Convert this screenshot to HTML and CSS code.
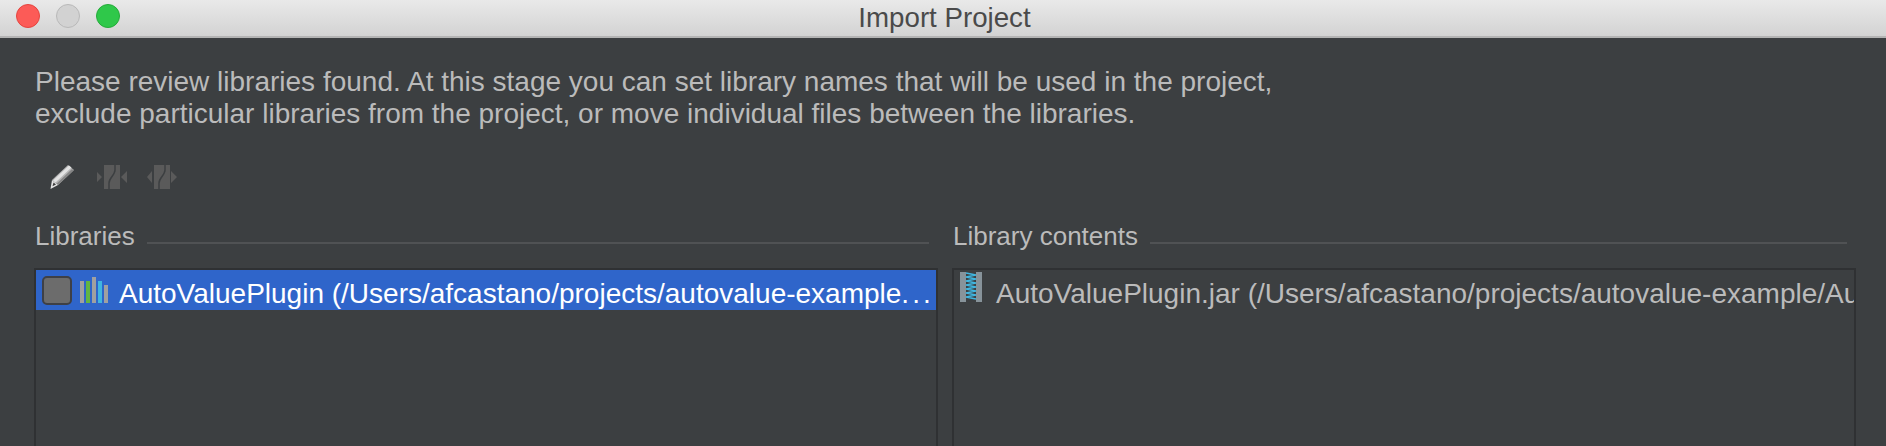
FILE: index.html
```html
<!DOCTYPE html>
<html lang="en">
<head>
    <meta charset="UTF-8">
    <title>Import Project</title>
    <link rel="stylesheet" href="styles.css">
</head>
<body>
    <header class="titlebar">
        <div class="lights">
            <span class="light red"></span>
            <span class="light gray"></span>
            <span class="light green"></span>
        </div>
        <h1>Import Project</h1>
    </header>

    <main class="content">
        <p class="intro">Please review libraries found. At this stage you can set library names that will be used in the project,<br>exclude particular libraries from the project, or move individual files between the libraries.</p>

        <div class="toolbar">
            <svg class="tool pencil" width="24" height="24" viewBox="0 0 24 24">
                <path d="M18 0l6 5L8 20l-6-5z" fill="#b4b4b4"/>
                <path d="M19 0.500l2.500 2L5.500 17.500 3 15.500z" fill="#e2e2e2"/>
                <path d="M22 4l1.500 1.500L8 20l-1.500-1.200z" fill="#858585"/>
                <path d="M2 15l6 5-7.500 4z" fill="#e4e4e4"/>
                <path d="M3.500 17.500l2.500 2-3.500 1.800z" fill="#3a3a3a"/>
            </svg>
            <svg class="tool" width="30" height="24" viewBox="0 0 30 24">
                <rect x="7" y="0" width="16" height="24" fill="#5a5a5a"/>
                <path d="M18 0v5c0 5-6 8-6 13v6" stroke="#3c3f41" stroke-width="1.500" fill="none"/>
                <path d="M0 7l5 5-5 5zM30 6l-6 6 6 6z" fill="#5a5a5a"/>
            </svg>
            <svg class="tool" width="30" height="24" viewBox="0 0 30 24">
                <rect x="7" y="0" width="16" height="24" fill="#5a5a5a"/>
                <path d="M18 0v5c0 5-6 8-6 13v6" stroke="#3c3f41" stroke-width="1.500" fill="none"/>
                <path d="M5 6l-5 6 5 6zM24 6l6 6-6 6z" fill="#5a5a5a"/>
            </svg>
        </div>

        <div class="columns">
            <section class="column">
                <div class="legend"><span>Libraries</span><i></i></div>
                <div class="panel">
                    <div class="row selected">
                        <span class="checkbox"></span>
                        <svg class="row-icon" width="28" height="26" viewBox="0 0 28 26">
                            <rect x="0" y="4" width="4" height="22" fill="#a0a0a0"/>
                            <rect x="6" y="4" width="4" height="22" fill="#62b543"/>
                            <rect x="12" y="0" width="4" height="26" fill="#a0a0a0"/>
                            <rect x="18" y="4" width="4" height="22" fill="#40b6e0"/>
                            <rect x="24" y="8" width="4" height="18" fill="#a0a0a0"/>
                        </svg>
                        <span class="row-text">AutoValuePlugin (/Users/afcastano/projects/autovalue-example<span class="dots">...</span></span>
                    </div>
                </div>
            </section>
            <section class="column">
                <div class="legend"><span>Library contents</span><i></i></div>
                <div class="panel">
                    <div class="row">
                        <svg class="row-icon jar" width="22" height="30" viewBox="0 0 22 30">
                            <rect x="0" y="0" width="6" height="30" fill="#87939a"/>
                            <rect x="16" y="0" width="6" height="30" fill="#87939a"/>
                            <path d="M6 1l10 2-10 2 10 2-10 2 10 2-10 2 10 2-10 2 10 2-10 2 10 2-10 2 10 2" stroke="#40b6e0" stroke-width="1.500" fill="none"/>
                        </svg>
                        <span class="row-text">AutoValuePlugin.jar (/Users/afcastano/projects/autovalue-example/AutoValuePlugin.jar)</span>
                    </div>
                </div>
            </section>
        </div>
    </main>
</body>
</html>
```

FILE: styles.css
```css
html, body {
    margin: 0;
    padding: 0;
    height: 446px;
    overflow: hidden;
}

body {
    font-family: "Liberation Sans", Arial, sans-serif;
    font-size: 26px;
    background-color: #3c3f41;
    color: #bbbbbb;
}

/* title bar */

.titlebar {
    position: relative;
    height: 36px;
    background: linear-gradient(#e9e9e9, #d3d3d3);
    border-bottom: 2px solid #b4b4b4;
}

.titlebar h1 {
    margin: 0;
    padding-left: 3px;
    font-size: 27.7px;
    font-weight: 400;
    line-height: 35px;
    text-align: center;
    color: #4a4a4a;
}

.lights {
    position: absolute;
    left: 16px;
    top: 4px;
    display: flex;
    gap: 16px;
}

.light {
    box-sizing: border-box;
    width: 24px;
    height: 24px;
    border-radius: 50%;
    border: 1px solid;
}

.red { background-color: #fc5b57; border-color: #e5453f; }
.gray { background-color: #d2d2d2; border-color: #b9b9b9; }
.green { background-color: #2fc84a; border-color: #25ab3a; }

/* body */

.content {
    padding: 28px 30px 0 35px;
}

.intro {
    margin: 0;
    font-size: 28px;
    line-height: 32px;
}

.toolbar {
    display: flex;
    align-items: center;
    gap: 20px;
    margin-top: 35px;
    padding-left: 15px;
    height: 24px;
}

.tool {
    display: block;
}

.pencil {
    margin-right: 3px;
}

.columns {
    display: flex;
    gap: 14px;
    margin: 31px 0 0 -1px;
}

.column {
    flex: none;
    width: 904px;
}

.legend {
    display: flex;
    align-items: center;
    gap: 12px;
    height: 32px;
    padding-left: 1px;
    padding-right: 9px;
}

.legend i {
    flex: 1;
    height: 2px;
    margin-top: 14px;
    background-color: #505254;
}

.panel {
    box-sizing: border-box;
    height: 200px;
    margin-top: 16px;
    border: 2px solid #2f3133;
    overflow: hidden;
}

.row {
    display: flex;
    align-items: center;
    height: 40px;
    padding-left: 6px;
    font-size: 28px;
    white-space: nowrap;
}

.row-text {
    margin-top: 7px;
}

.dots {
    letter-spacing: 3px;
}

.selected {
    background-color: #2f65ca;
    color: #ffffff;
}

.checkbox {
    box-sizing: border-box;
    flex: none;
    width: 30px;
    height: 29px;
    margin-right: 8px;
    border: 2px solid #3e4046;
    border-radius: 5px;
    background-color: #6c6c6c;
}

.row-icon {
    flex: none;
    margin-right: 11px;
}

.jar {
    margin-top: -6px;
    margin-right: 14px;
}
```
